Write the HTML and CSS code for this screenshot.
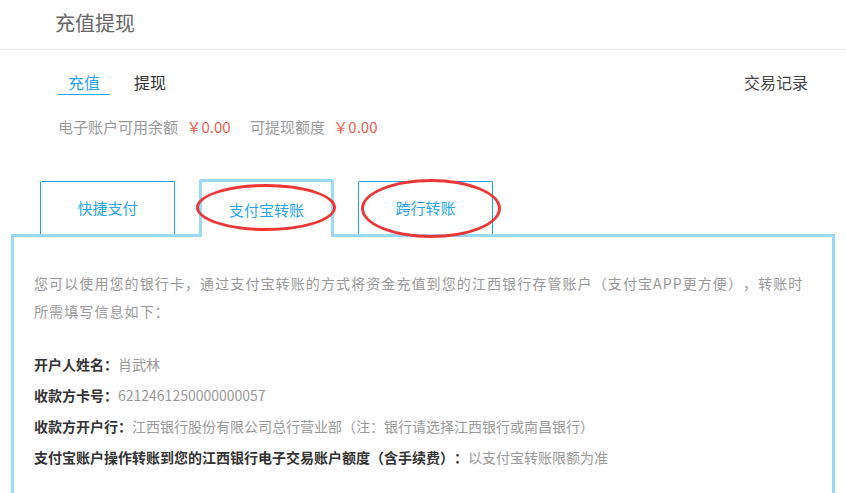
FILE: index.html
```html
<!DOCTYPE html>
<html lang="zh-CN">
<head>
  <meta charset="UTF-8">
  <meta name="viewport" content="width=device-width, initial-scale=1.0">
  <title>充值提现</title>
  <link rel="stylesheet" href="styles.css">
</head>
<body>
  <div class="header">
    <h1 class="page-title">充值提现</h1>
  </div>

  <div class="subnav">
    <div class="subnav-tabs">
      <a class="subnav-tab active">充值</a>
      <a class="subnav-tab">提现</a>
    </div>
    <a class="trade-log">交易记录</a>
  </div>

  <div class="balance">
    <span class="balance-label">电子账户可用余额</span>
    <span class="balance-amount">￥0.00</span>
    <span class="balance-label">可提现额度</span>
    <span class="balance-amount">￥0.00</span>
  </div>

  <div class="pay-tabs">
    <div class="pay-tab">快捷支付</div>
    <div class="pay-tab active">支付宝转账<span class="mark mark-alipay"></span></div>
    <div class="pay-tab">跨行转账<span class="mark mark-bank"></span></div>
  </div>

  <div class="pay-panel">
    <p class="intro">您可以使用您的银行卡，通过支付宝转账的方式将资金充值到您的江西银行存管账户（支付宝APP更方便），转账时所需填写信息如下：</p>
    <ul class="info-list">
      <li><b>开户人姓名：</b>肖武林</li>
      <li><b>收款方卡号：</b>6212461250000000057</li>
      <li><b>收款方开户行：</b>江西银行股份有限公司总行营业部（注：银行请选择江西银行或南昌银行）</li>
      <li><b>支付宝账户操作转账到您的江西银行电子交易账户额度（含手续费）：</b>以支付宝转账限额为准</li>
    </ul>
  </div>
</body>
</html>
```

FILE: styles.css
```css
body {
  margin: 0;
  font-family: "Noto Sans CJK SC", "Microsoft YaHei", sans-serif;
  color: #333;
  background: #fff;
  text-spacing-trim: space-all;
}
.header {
  padding: 8px 0 11px 55px;
  border-bottom: 1px solid #e8e8e8;
}
.page-title {
  margin: 0;
  font-size: 20px;
  line-height: 30px;
  font-weight: normal;
  color: #666;
}
.subnav {
  display: flex;
  justify-content: space-between;
  align-items: flex-start;
  margin-top: 20px;
  padding: 0 38px 0 58px;
}
.subnav-tabs {
  display: flex;
  gap: 14px;
}
.subnav-tab {
  padding: 0 10px;
  font-size: 16px;
  line-height: 24px;
  border-bottom: 1px solid transparent;
  color: #333;
}
.subnav-tab.active {
  color: #1ea7f5;
  border-bottom-color: #1ea7f5;
}
.trade-log {
  font-size: 16px;
  line-height: 24px;
  color: #444;
}
.balance {
  margin-top: 22px;
  padding-left: 58px;
  font-size: 15px;
  line-height: 20px;
}
.balance-label {
  color: #999;
}
.balance-amount {
  color: #f2604e;
  margin: 0 16px 0 5px;
}
.pay-tabs {
  display: flex;
  align-items: flex-end;
  gap: 24px;
  margin: 42px 11px 0;
  padding-left: 29px;
}
.pay-tab {
  position: relative;
  box-sizing: border-box;
  width: 135px;
  height: 53px;
  border: 1px solid #1ba4ea;
  border-bottom: none;
  border-radius: 2px 2px 0 0;
  text-align: center;
  font-size: 15px;
  line-height: 52px;
  color: #25a6f0;
  background: #fff;
}
.pay-tab.active {
  z-index: 1;
  height: 58px;
  margin-bottom: -3px;
  border: 3px solid #9bd9f9;
  border-bottom: none;
  border-radius: 3px 3px 0 0;
  line-height: 55px;
}
.mark {
  position: absolute;
  z-index: 2;
  box-sizing: border-box;
  border: 3px solid #ee3535;
  border-radius: 50%;
}
.mark-alipay {
  left: -6px;
  top: 2px;
  width: 140px;
  height: 47px;
}
.mark-bank {
  left: 2px;
  top: -3px;
  width: 140px;
  height: 59px;
}
.pay-panel {
  margin: 0 11px;
  padding: 32px 24px 60px 20px;
  border: 3px solid #9bd9f9;
  font-size: 14px;
  color: #999;
}
.intro {
  margin: 0;
  line-height: 28px;
  letter-spacing: 1.1px;
}
.info-list {
  list-style: none;
  margin: 24px 0 0;
  padding: 0;
  line-height: 31px;
}
.info-list b {
  color: #333;
}
```
